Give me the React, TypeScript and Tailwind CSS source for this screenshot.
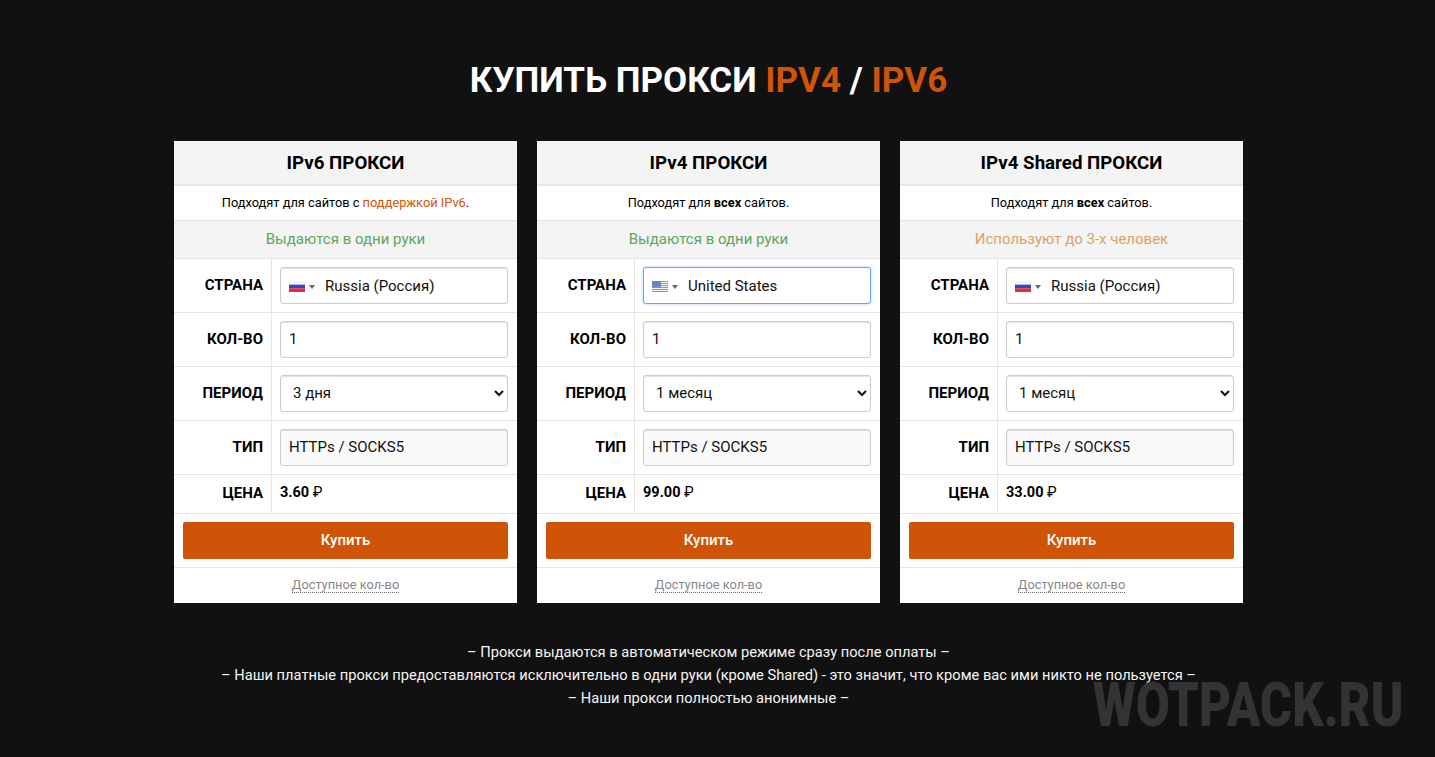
const fieldClass =
  "w-full h-[37px] px-2 text-[15px] text-[#111] border rounded-[3px] outline-none";
const fieldNormal = "bg-white border-[#ccc] shadow-[inset_0_1px_1px_rgba(0,0,0,0.12)]";
const fieldFocused = "bg-white border-[#6aa4ec] shadow-[0_0_3px_rgba(80,150,240,0.5)]";
const fieldReadonly = "bg-[#fafafa] border-[#ccc] shadow-[inset_0_1px_1px_rgba(0,0,0,0.12)]";

function RuFlag() {
  return (
    <svg width="16" height="11" viewBox="0 0 16 11" className="shrink-0">
      <rect width="16" height="3.67" fill="#f4f4f8" />
      <rect y="3.67" width="16" height="3.67" fill="#3048c8" />
      <rect y="7.33" width="16" height="3.67" fill="#e8283c" />
    </svg>
  );
}

function UsFlag() {
  return (
    <svg width="16" height="11" viewBox="0 0 16 11" className="shrink-0">
      <rect width="16" height="11" fill="#f6f6f6" />
      <rect y="0" width="16" height="1" fill="#e0756f" />
      <rect y="2" width="16" height="1" fill="#e0756f" />
      <rect y="4" width="16" height="1" fill="#e0756f" />
      <rect y="6" width="16" height="1" fill="#e0756f" />
      <rect y="8" width="16" height="1" fill="#e0756f" />
      <rect y="10" width="16" height="1" fill="#e0756f" />
      <rect width="9" height="6" fill="#6f82c0" />
    </svg>
  );
}

function Row({ label, children, short }: { label: string; children: React.ReactNode; short?: boolean }) {
  return (
    <div className={`flex border-b border-[#e5e5e5] ${short ? "h-[39px]" : "h-[54px]"}`}>
      <div
        className={`w-[98px] shrink-0 flex items-center justify-end pr-2 border-r border-[#e5e5e5] text-[15px] font-bold text-black ${
          short ? "pb-[2px]" : ""
        }`}
      >
        {label}
      </div>
      <div className={`flex-1 flex items-center pl-2 pr-[9px] ${short ? "pb-[2px]" : ""}`}>{children}</div>
    </div>
  );
}

interface Plan {
  title: string;
  note: React.ReactNode;
  usage: string;
  usageColor: string;
  flag: React.ReactNode;
  country: string;
  focused?: boolean;
  period: string;
  price: string;
}

const plans: Plan[] = [
  {
    title: "IPv6 ПРОКСИ",
    note: (
      <span>
        Подходят для сайтов с <span className="text-[#cf5408]">поддержкой IPv6</span>.
      </span>
    ),
    usage: "Выдаются в одни руки",
    usageColor: "text-[#5fa55f]",
    flag: <RuFlag />,
    country: "Russia (Россия)",
    period: "3 дня",
    price: "3.60",
  },
  {
    title: "IPv4 ПРОКСИ",
    note: (
      <span>
        Подходят для <b>всех</b> сайтов.
      </span>
    ),
    usage: "Выдаются в одни руки",
    usageColor: "text-[#5fa55f]",
    flag: <UsFlag />,
    country: "United States",
    focused: true,
    period: "1 месяц",
    price: "99.00",
  },
  {
    title: "IPv4 Shared ПРОКСИ",
    note: (
      <span>
        Подходят для <b>всех</b> сайтов.
      </span>
    ),
    usage: "Используют до 3-х человек",
    usageColor: "text-[#dfa064]",
    flag: <RuFlag />,
    country: "Russia (Россия)",
    period: "1 месяц",
    price: "33.00",
  },
];

function PlanCard({ plan }: { plan: Plan }) {
  return (
    <div className="bg-white text-black">
      <div className="h-[45px] pt-px flex items-center justify-center bg-[#f4f4f4] border-b-2 border-[#e5e5e5] text-[18.72px] font-bold">
        {plan.title}
      </div>
      <div className="h-[35px] flex items-center justify-center border-b border-[#e5e5e5] text-[12.8px]">
        {plan.note}
      </div>
      <div className={`h-[38px] flex items-center justify-center bg-[#f4f4f4] border-b border-[#e5e5e5] text-[15px] ${plan.usageColor}`}>
        {plan.usage}
      </div>
      <Row label="СТРАНА">
        <div className={`${fieldClass} pt-[2px] flex items-center ${plan.focused ? fieldFocused : fieldNormal}`}>
          {plan.flag}
          <span className="ml-1 mr-[10px] w-0 h-0 border-x-[3px] border-x-transparent border-t-[4px] border-t-[#666]" />
          <span>{plan.country}</span>
        </div>
      </Row>
      <Row label="КОЛ-ВО">
        <input className={`${fieldClass} pb-px ${fieldNormal}`} defaultValue="1" />
      </Row>
      <Row label="ПЕРИОД">
        <select className={`${fieldClass} pb-px ${fieldNormal}`} defaultValue={plan.period}>
          <option>{plan.period}</option>
        </select>
      </Row>
      <Row label="ТИП">
        <input className={`${fieldClass} pb-px ${fieldReadonly}`} defaultValue="HTTPs / SOCKS5" readOnly />
      </Row>
      <Row label="ЦЕНА" short>
        <span className="text-[14.5px] font-bold">
          {plan.price} <span className="font-normal">₽</span>
        </span>
      </Row>
      <div className="h-[54px] flex items-center px-[9px] border-b border-[#e5e5e5]">
        <button className="w-full h-[37px] bg-[#cf5408] text-white text-[15px] font-medium rounded-[2px]">
          Купить
        </button>
      </div>
      <div className="h-[35px] flex items-center justify-center text-[12.8px] text-[#888]">
        <span className="border-b border-dotted border-[#666] leading-[14px]">Доступное кол-во</span>
      </div>
    </div>
  );
}

export default function App() {
  return (
    <div className="relative h-[757px] overflow-hidden bg-[#111111] font-['Roboto',sans-serif]">
      <div className="w-[1417px] flex flex-col items-center">
        <h1 className="mt-[59px] h-[44px] leading-[44px] text-[35px] font-bold text-white">
          КУПИТЬ ПРОКСИ <span className="text-[#cf5408]">IPV4</span> / <span className="text-[#cf5408]">IPV6</span>
        </h1>
        <div className="mt-[38px] w-[1069px] grid grid-cols-3 gap-5">
          {plans.map((plan) => (
            <PlanCard key={plan.title} plan={plan} />
          ))}
        </div>
        <div className="mt-[38px] text-center text-[14.67px] leading-[23px] text-[#f5f5f5]">
          <p>– Прокси выдаются в автоматическом режиме сразу после оплаты –</p>
          <p>– Наши платные прокси предоставляются исключительно в одни руки (кроме Shared) - это значит, что кроме вас ими никто не пользуется –</p>
          <p>– Наши прокси полностью анонимные –</p>
        </div>
      </div>
      {/* watermark */}
      <div className="absolute left-[1093px] top-[674px] w-[310px] text-[62px] leading-[62px] font-black text-[#333] whitespace-nowrap origin-left scale-x-[0.795]">
        WOTPACK.RU
      </div>
    </div>
  );
}
